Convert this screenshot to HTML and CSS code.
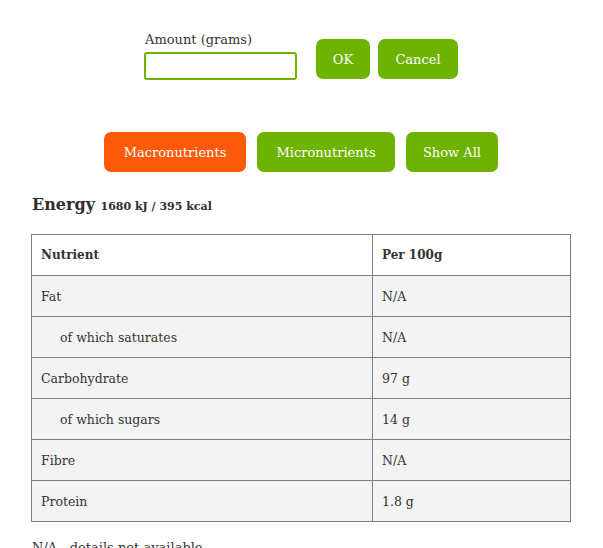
FILE: index.html
```html
<!DOCTYPE html>
<html>
<head>
<meta charset="utf-8">
<link rel="stylesheet" href="styles.css">
</head>
<body>
<div class="page">
  <form class="amount-form">
    <div class="field">
      <label class="field-label" for="amt">Amount (grams)</label>
      <input id="amt" class="field-input" type="text">
    </div>
    <button type="button" class="btn btn-ok">OK</button>
    <button type="button" class="btn btn-cancel">Cancel</button>
  </form>

  <div class="tabs">
    <button type="button" class="btn tab tab-active">Macronutrients</button>
    <button type="button" class="btn tab">Micronutrients</button>
    <button type="button" class="btn tab">Show All</button>
  </div>

  <h2 class="energy">Energy <span class="energy-val">1680 kJ / 395 kcal</span></h2>

  <table class="nutri">
    <thead>
      <tr><th class="col-name">Nutrient</th><th>Per 100g</th></tr>
    </thead>
    <tbody>
      <tr><td>Fat</td><td>N/A</td></tr>
      <tr><td class="sub">of which saturates</td><td>N/A</td></tr>
      <tr><td>Carbohydrate</td><td>97 g</td></tr>
      <tr><td class="sub">of which sugars</td><td>14 g</td></tr>
      <tr><td>Fibre</td><td>N/A</td></tr>
      <tr><td>Protein</td><td>1.8 g</td></tr>
    </tbody>
  </table>

  <p class="note">N/A - details not available</p>
</div>
</body>
</html>
```

FILE: styles.css
```css
html, body {
  margin: 0;
  padding: 0;
  background: #ffffff;
}
body {
  font-family: "DejaVu Serif", "Liberation Serif", serif;
  color: #333333;
  font-size: 13px;
}
.page {
  width: 540px;
  margin: 0 auto 0 31px;
  padding-top: 31px;
}
.amount-form {
  display: flex;
  justify-content: center;
  align-items: flex-end;
  margin: 0;
}
.field {
  display: flex;
  flex-direction: column;
}
.field-label {
  font-size: 13px;
  line-height: 18px;
  margin-bottom: 3px;
  padding-left: 1px;
}
.field-input {
  width: 145px;
  height: 24px;
  border: 2px solid #6db300;
  border-radius: 3px;
  padding: 0 2px;
  margin: 0 0 -1px 0;
  box-sizing: content-box;
  font-size: 13px;
  outline: none;
}
.btn {
  font-family: "DejaVu Serif", "Liberation Serif", serif;
  font-size: 13px;
  color: #ffffff;
  background: #6db300;
  border: none;
  border-radius: 7px;
  height: 40px;
  padding: 0 16px;
  cursor: pointer;
}
.btn-ok {
  width: 54px;
  padding: 0;
  margin-left: 19px;
}
.btn-cancel {
  width: 80px;
  padding: 0;
  margin-left: 8px;
}
.tabs {
  display: flex;
  justify-content: center;
  gap: 11px;
  margin-top: 53px;
}
.tab {
  padding: 0;
}
.tab:nth-child(1) { width: 142px; }
.tab:nth-child(2) { width: 138px; }
.tab:nth-child(3) { width: 92px; }
.tab-active {
  background: #ff5a0a;
}
.energy {
  font-size: 16px;
  font-weight: bold;
  margin: 23px 0 0 1px;
  line-height: 20px;
  color: #2e2e2e;
}
.energy-val {
  font-size: 11px;
}
.nutri {
  width: 540px;
  border-collapse: collapse;
  margin-top: 17px;
}
.nutri th, .nutri td {
  border: 1px solid #7f7f7f;
  height: 41px;
  padding: 0 0 0 9px;
  text-align: left;
  font-size: 12.5px;
  box-sizing: border-box;
}
.nutri th {
  font-weight: bold;
  background: #ffffff;
  font-size: 12px;
}
.col-name {
  width: 341px;
}
.nutri td {
  background: #f3f3f3;
}
.nutri td.sub {
  padding-left: 28px;
}
.note {
  margin: 18px 0 0 1px;
  font-size: 13px;
}
```
